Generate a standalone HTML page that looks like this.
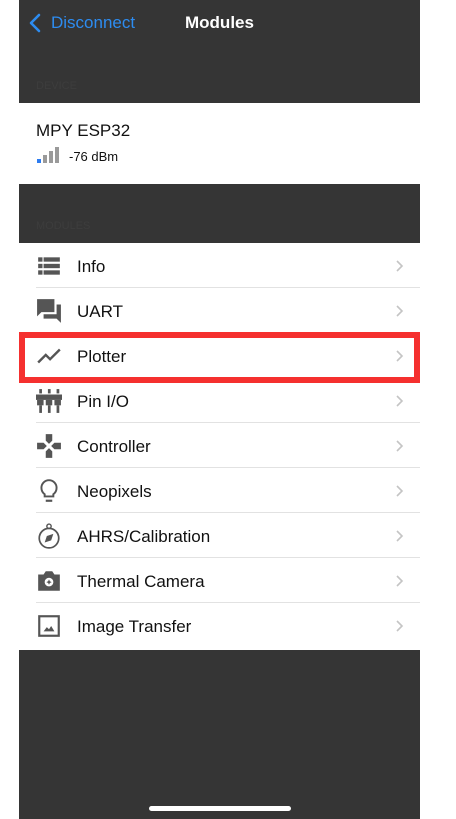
<!DOCTYPE html>
<html><head><meta charset="utf-8"><style>
*{margin:0;padding:0;box-sizing:border-box}
body{width:456px;height:819px;background:#fff;position:relative;overflow:hidden;font-family:"Liberation Sans",sans-serif}
.dark{position:absolute;left:19px;width:401px;background:#353535}
.row{position:absolute;left:19px;width:401px;height:45px;background:#fff}
.row .sep{position:absolute;left:17px;right:0;bottom:0;height:1px;background:#e2e2e2}
.row .t{position:absolute;left:58px;top:14px;font-size:17px;color:#111}
.row .ch{position:absolute;right:16px;top:16px;width:9px;height:14px}
.row .ic{position:absolute;left:17px;top:10px;width:26px;height:26px}
</style></head><body>
<div class="dark" style="top:0;height:103px"></div>
<svg style="position:absolute;left:28px;top:13px" width="14" height="20" viewBox="0 0 14 20"><path d="M11 2L3 10l8 8" stroke="#2d8cf0" stroke-width="2.6" fill="none" stroke-linecap="round" stroke-linejoin="round"/></svg>
<div style="position:absolute;left:51px;top:13px;font-size:17px;color:#2d8cf0">Disconnect</div>
<div style="position:absolute;left:185px;top:13px;font-size:17px;color:#fff;font-weight:bold">Modules</div>
<div style="position:absolute;left:36px;top:80px;font-size:11px;color:#3d3d3d">DEVICE</div>
<div style="position:absolute;left:36px;top:121px;font-size:17px;color:#111">MPY ESP32</div>
<svg style="position:absolute;left:37px;top:146px" width="24" height="20"><rect x="0" y="13" width="4" height="4" fill="#2d7cf0"/><rect x="6" y="9" width="4" height="8" fill="#9a9a9a"/><rect x="12" y="5" width="4" height="12" fill="#9a9a9a"/><rect x="18" y="1" width="4" height="16" fill="#9a9a9a"/></svg>
<div style="position:absolute;left:69px;top:149px;font-size:13px;color:#111">-76 dBm</div>
<div class="dark" style="top:184px;height:59px"></div>
<div style="position:absolute;left:36px;top:220px;font-size:11px;color:#3d3d3d">MODULES</div>

<div class="row" style="top:243px"><svg class="ic" viewBox="0 0 24 24"><g fill="#555"><rect x="2" y="4" width="4" height="4"/><rect x="7" y="4" width="15" height="4"/><rect x="2" y="10" width="4" height="4"/><rect x="7" y="10" width="15" height="4"/><rect x="2" y="16" width="4" height="4"/><rect x="7" y="16" width="15" height="4"/></g></svg><div class="t">Info</div><svg class="ch" viewBox="0 0 9 14"><path d="M2 2l5 5-5 5" stroke="#c4c4c4" stroke-width="1.6" fill="none"/></svg><div class="sep"></div></div>
<div class="row" style="top:288px"><svg class="ic" viewBox="0 0 24 24"><path fill="#555" d="M1 1h16v12H5l-4 4zM19 6h4v17l-4-4H7v-4h12z"/></svg><div class="t">UART</div><svg class="ch" viewBox="0 0 9 14"><path d="M2 2l5 5-5 5" stroke="#c4c4c4" stroke-width="1.6" fill="none"/></svg><div class="sep"></div></div>
<div class="row" style="top:333px"><svg class="ic" viewBox="0 0 24 24"><path d="M2 18l7-7 4 4 9-9" stroke="#555" stroke-width="2.2" fill="none"/></svg><div class="t">Plotter</div><svg class="ch" viewBox="0 0 9 14"><path d="M2 2l5 5-5 5" stroke="#c4c4c4" stroke-width="1.6" fill="none"/></svg><div class="sep"></div></div>
<div class="row" style="top:378px"><svg class="ic" viewBox="0 0 24 24"><g fill="#555"><rect x="3" y="1" width="2.5" height="4"/><rect x="11" y="1" width="2.5" height="4"/><rect x="19" y="1" width="2.5" height="4"/><rect x="0" y="6" width="24" height="5"/><rect x="1" y="11" width="6" height="5"/><rect x="9" y="11" width="6" height="5"/><rect x="17" y="11" width="6" height="5"/><rect x="3" y="16" width="2.5" height="7"/><rect x="11" y="16" width="2.5" height="7"/><rect x="19" y="16" width="2.5" height="7"/></g></svg><div class="t">Pin I/O</div><svg class="ch" viewBox="0 0 9 14"><path d="M2 2l5 5-5 5" stroke="#c4c4c4" stroke-width="1.6" fill="none"/></svg><div class="sep"></div></div>
<div class="row" style="top:423px"><svg class="ic" viewBox="0 0 24 24"><path fill="#555" d="M9 1h6v6l-3 3-3-3zM1 9h6l3 3-3 3H1zM23 9h-6l-3 3 3 3h6zM9 23h6v-6l-3-3-3 3z"/></svg><div class="t">Controller</div><svg class="ch" viewBox="0 0 9 14"><path d="M2 2l5 5-5 5" stroke="#c4c4c4" stroke-width="1.6" fill="none"/></svg><div class="sep"></div></div>
<div class="row" style="top:468px"><svg class="ic" viewBox="0 0 24 24"><path d="M8 17v-2c-2-1.5-3-3.5-3-6a7 7 0 0 1 14 0c0 2.5-1 4.5-3 6v2z" stroke="#555" stroke-width="1.8" fill="none"/><path d="M9 21h6" stroke="#555" stroke-width="2"/></svg><div class="t">Neopixels</div><svg class="ch" viewBox="0 0 9 14"><path d="M2 2l5 5-5 5" stroke="#c4c4c4" stroke-width="1.6" fill="none"/></svg><div class="sep"></div></div>
<div class="row" style="top:513px"><svg class="ic" viewBox="0 0 24 24"><circle cx="12" cy="14" r="9" stroke="#555" stroke-width="1.6" fill="none"/><circle cx="12" cy="3" r="2" stroke="#555" stroke-width="1.3" fill="none"/><path d="M16 10l-2 6-6 2 2-6z" fill="#555"/></svg><div class="t">AHRS/Calibration</div><svg class="ch" viewBox="0 0 9 14"><path d="M2 2l5 5-5 5" stroke="#c4c4c4" stroke-width="1.6" fill="none"/></svg><div class="sep"></div></div>
<div class="row" style="top:558px"><svg class="ic" viewBox="0 0 24 24"><path fill="#555" d="M2 6h5l2-3h6l2 3h5v15H2z"/><circle cx="12" cy="13" r="4" fill="#fff"/><path d="M12 10.5l.8 1.7 1.7.8-1.7.8-.8 1.7-.8-1.7-1.7-.8 1.7-.8z" fill="#555"/></svg><div class="t">Thermal Camera</div><svg class="ch" viewBox="0 0 9 14"><path d="M2 2l5 5-5 5" stroke="#c4c4c4" stroke-width="1.6" fill="none"/></svg><div class="sep"></div></div>
<div class="row" style="top:603px;height:47px"><svg class="ic" viewBox="0 0 24 24"><rect x="3" y="3" width="18" height="18" stroke="#555" stroke-width="2" fill="none"/><path d="M7 17l3-4 2 2 2-3 3 5z" fill="#555"/></svg><div class="t">Image Transfer</div><svg class="ch" viewBox="0 0 9 14"><path d="M2 2l5 5-5 5" stroke="#c4c4c4" stroke-width="1.6" fill="none"/></svg></div>

<div style="position:absolute;left:19px;top:332px;width:401px;height:51px;border:6px solid #f5302f"></div>
<div class="dark" style="top:650px;height:169px"></div>
<div style="position:absolute;left:149px;top:806px;width:142px;height:5px;border-radius:3px;background:#fff"></div>
</body></html>
